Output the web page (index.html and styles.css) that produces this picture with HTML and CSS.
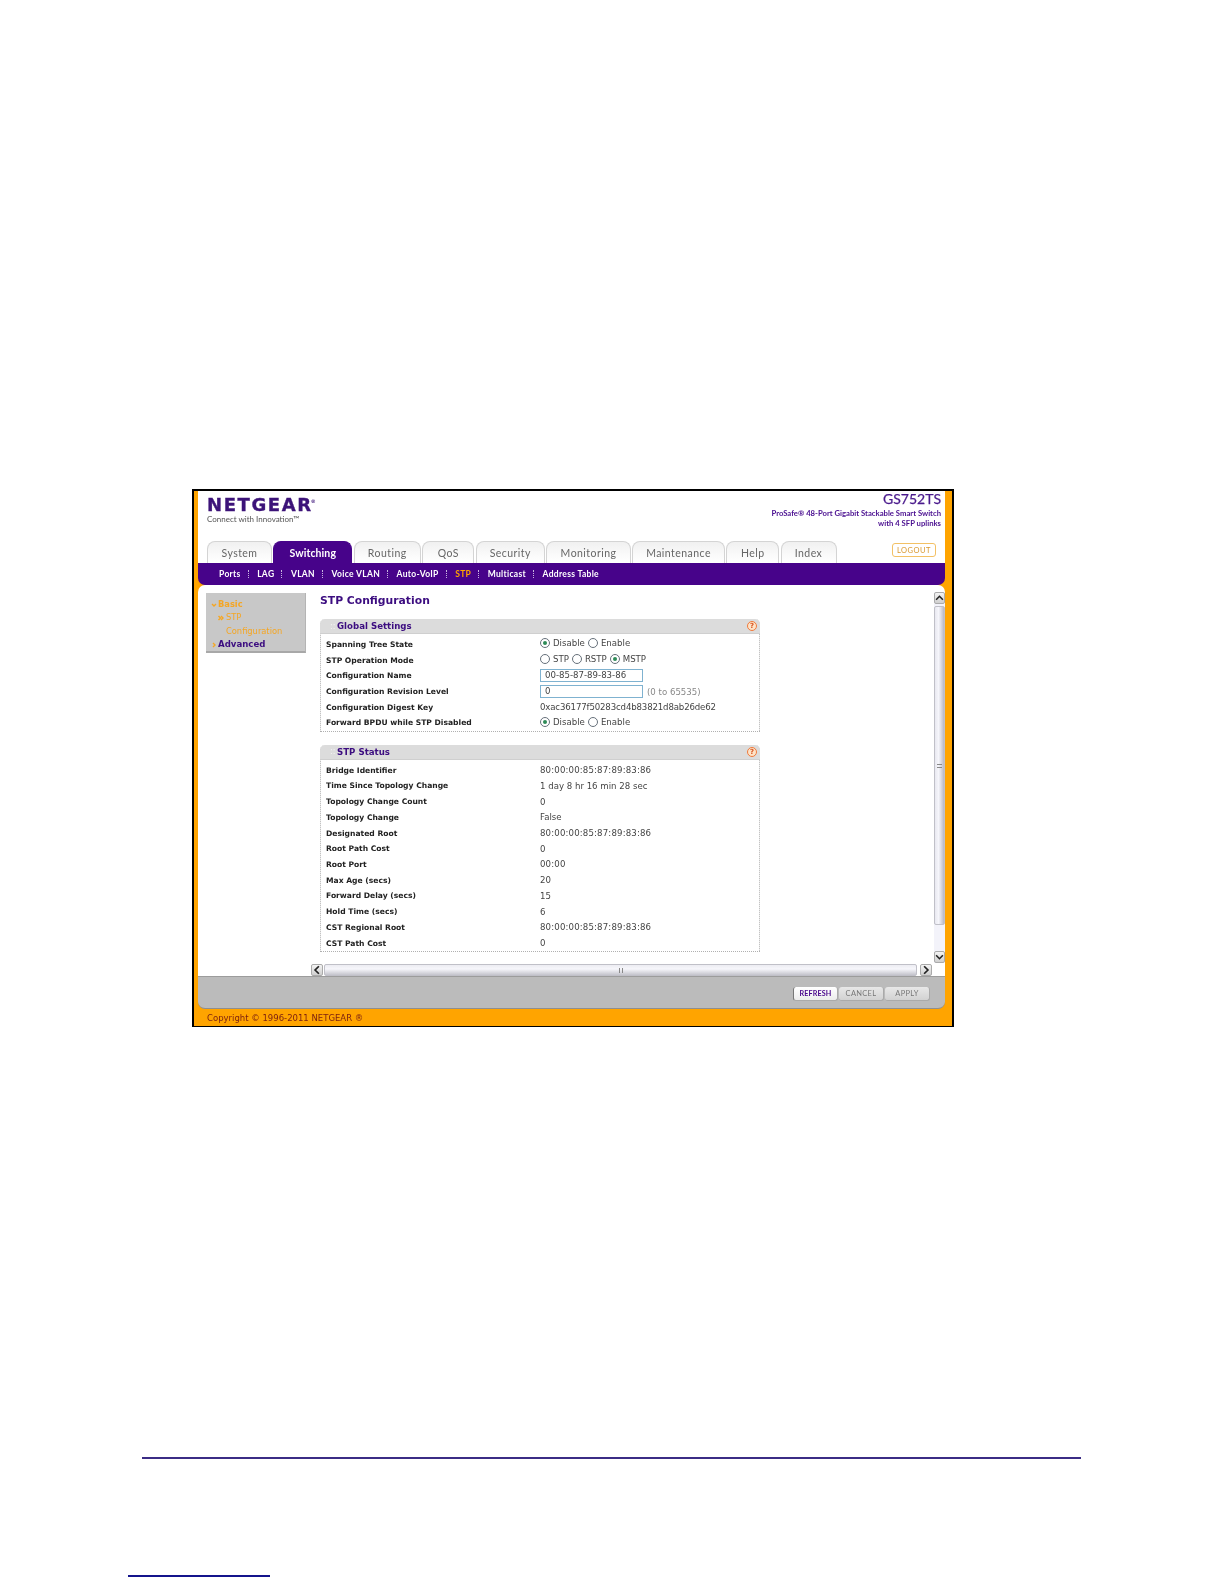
FILE: index.html
```html
<!DOCTYPE html>
<html lang="en">
<head>
<meta charset="utf-8">
<title>STP Configuration</title>
<link rel="stylesheet" href="styles.css">
</head>
<body>
<main class="page">
  <div class="frame">
    <header class="head">
      <div class="brand">
        <div class="logo">NETGEAR<sup class="reg">®</sup></div>
        <div class="tagline">Connect with Innovation™</div>
      </div>
      <div class="model">
        <div class="model-name">GS752TS</div>
        <div class="model-desc">ProSafe® 48-Port Gigabit Stackable Smart Switch</div>
        <div class="model-desc">with 4 SFP uplinks</div>
      </div>
    </header>
    <nav class="tabs">
      <a class="tab t1">System</a>
      <a class="tab t2 active">Switching</a>
      <a class="tab t3">Routing</a>
      <a class="tab t4">QoS</a>
      <a class="tab t5">Security</a>
      <a class="tab t6">Monitoring</a>
      <a class="tab t7">Maintenance</a>
      <a class="tab t8">Help</a>
      <a class="tab t9">Index</a>
      <a class="logout">LOGOUT</a>
    </nav>
    <nav class="subnav">
      <a class="sub">Ports</a><a class="sub">LAG</a><a class="sub">VLAN</a><a class="sub">Voice VLAN</a><a class="sub">Auto-VoIP</a><a class="sub current">STP</a><a class="sub">Multicast</a><a class="sub last">Address Table</a>
    </nav>
    <section class="content">
      <div class="view">
        <div class="pane">
          <aside class="side">
            <div class="side-row lvl1 on"><svg class="chev" viewBox="0 0 6 6"><path d="M1 2l2 2 2-2" /></svg>Basic</div>
            <div class="side-row lvl2"><svg class="chev chev2" viewBox="0 0 6 6"><path d="M.5 1l2 2-2 2M3 1l2 2-2 2" /></svg>STP</div>
            <div class="side-row lvl3">Configuration</div>
            <div class="side-row lvl1 off"><svg class="chev" viewBox="0 0 6 6"><path d="M2 1l2 2-2 2" /></svg>Advanced</div>
          </aside>
          <div class="main">
            <h1 class="title">STP Configuration</h1>
            <div class="box">
              <div class="box-head"><span class="grip">::</span><span class="box-title">Global Settings</span><span class="help">?</span></div>
              <div class="rows">
                <div class="row"><span class="label">Spanning Tree State</span><span class="val options"><i class="radio on"></i><span class="opt">Disable</span><i class="radio"></i><span class="opt">Enable</span></span></div>
                <div class="row"><span class="label">STP Operation Mode</span><span class="val options"><i class="radio"></i><span class="opt">STP</span><i class="radio"></i><span class="opt">RSTP</span><i class="radio on"></i><span class="opt">MSTP</span></span></div>
                <div class="row"><span class="label">Configuration Name</span><span class="val"><span class="field">00-85-87-89-83-86</span></span></div>
                <div class="row"><span class="label">Configuration Revision Level</span><span class="val"><span class="field">0</span><span class="hint">(0 to 65535)</span></span></div>
                <div class="row"><span class="label">Configuration Digest Key</span><span class="val digest">0xac36177f50283cd4b83821d8ab26de62</span></div>
                <div class="row"><span class="label">Forward BPDU while STP Disabled</span><span class="val options"><i class="radio on"></i><span class="opt">Disable</span><i class="radio"></i><span class="opt">Enable</span></span></div>
              </div>
            </div>
            <div class="box second">
              <div class="box-head"><span class="grip">::</span><span class="box-title">STP Status</span><span class="help">?</span></div>
              <div class="rows">
                <div class="row"><span class="label">Bridge Identifier</span><span class="val mac">80:00:00:85:87:89:83:86</span></div>
                <div class="row"><span class="label">Time Since Topology Change</span><span class="val">1 day 8 hr 16 min 28 sec</span></div>
                <div class="row"><span class="label">Topology Change Count</span><span class="val">0</span></div>
                <div class="row"><span class="label">Topology Change</span><span class="val">False</span></div>
                <div class="row"><span class="label">Designated Root</span><span class="val mac">80:00:00:85:87:89:83:86</span></div>
                <div class="row"><span class="label">Root Path Cost</span><span class="val">0</span></div>
                <div class="row"><span class="label">Root Port</span><span class="val mac">00:00</span></div>
                <div class="row"><span class="label">Max Age (secs)</span><span class="val">20</span></div>
                <div class="row"><span class="label">Forward Delay (secs)</span><span class="val">15</span></div>
                <div class="row"><span class="label">Hold Time (secs)</span><span class="val">6</span></div>
                <div class="row"><span class="label">CST Regional Root</span><span class="val mac">80:00:00:85:87:89:83:86</span></div>
                <div class="row"><span class="label">CST Path Cost</span><span class="val">0</span></div>
              </div>
            </div>
          </div>
        </div>
        <div class="vscroll">
          <span class="sb-btn"><svg viewBox="0 0 8 8"><path d="M1 5.5l3-3 3 3" /></svg></span>
          <span class="vthumb"><b class="vgrip"></b></span>
          <span class="sb-btn down"><svg viewBox="0 0 8 8"><path d="M1 2.5l3 3 3-3" /></svg></span>
        </div>
      </div>
      <div class="hscroll">
        <span class="sb-btn"><svg viewBox="0 0 8 8"><path d="M5.5 1l-3 3 3 3" /></svg></span>
        <span class="hthumb"><b class="hgrip"></b></span>
        <span class="sb-btn"><svg viewBox="0 0 8 8"><path d="M2.5 1l3 3-3 3" /></svg></span>
      </div>
    </section>
    <div class="actions">
      <a class="btn primary">REFRESH</a>
      <a class="btn">CANCEL</a>
      <a class="btn">APPLY</a>
    </div>
    <footer class="copy">Copyright © 1996-2011 NETGEAR ®</footer>
  </div>
  <div class="rule"></div>
  <div class="rule-short"></div>
</main>
</body>
</html>
```
FILE: styles.css
```css
* { box-sizing: border-box; }
html, body { margin: 0; background: #fff; }
body { font-family: "DejaVu Sans", Verdana, sans-serif; }
.page { width: 1224px; height: 1584px; padding-top: 489px; overflow: hidden; }

.frame {
  width: 762px; height: 538px; margin-left: 192px;
  border: solid #000; border-width: 2px 2px 1px 2px;
  background: #ffa400; padding: 0 7px 0 4px;
  filter: blur(.35px);
}

.head { height: 50px; background: #fff; display: flex; justify-content: space-between; padding: 7px 4px 0 9px; }
.logo { font: 700 18px/14px "DejaVu Sans", sans-serif; letter-spacing: 1.6px; color: #3c1379; -webkit-text-stroke: .35px #3c1379; }
.reg { font-size: 5px; line-height: 0; vertical-align: 8px; letter-spacing: 0; margin-left: -2px; -webkit-text-stroke: 0; }
.tagline { font: 400 8px/10px Lato, sans-serif; color: #555; margin-top: 2px; }
.model { text-align: right; margin-top: -7px; }
.model-name { font: 400 14px/16px Lato, sans-serif; color: #4a1a8c; margin-bottom: 2px; -webkit-text-stroke: .25px #4a1a8c; }
.model-desc { font: 700 7.7px/9.5px Lato, sans-serif; color: #4a0f90; }

.tabs { height: 22px; background: #fff; display: flex; gap: 1.25px; padding-left: 9px; align-items: flex-end; }
.tab {
  height: 22px; border: 1px solid #d4d4d4; border-bottom: 0; border-radius: 8px 8px 0 0;
  background: linear-gradient(#f0f0f0, #fafafa 60%, #fff);
  font: 400 10.5px/22px Lato, sans-serif; letter-spacing: .45px; color: #666; text-align: center;
}
.tab.active { background: #47038a; border-color: #47038a; color: #fff; font-weight: 700; letter-spacing: .1px; }
.t1 { width: 65px; } .t2 { width: 79px; } .t3 { width: 67.5px; } .t4 { width: 52px; }
.t5 { width: 69.5px; } .t6 { width: 84.5px; } .t7 { width: 93px; } .t8 { width: 53px; } .t9 { width: 56px; }
.logout {
  width: 44px; height: 14px; margin: 0 9px 6px auto; border: 1px solid #f3c165; border-radius: 3px;
  font: 400 7.5px/13px Lato, sans-serif; letter-spacing: .5px; color: #d9982f; text-align: center;
}

.subnav { height: 22px; background: #47038a; border-radius: 0 0 7px 7px; display: flex; align-items: center; padding-left: 21px; }
.sub { font: 700 8.5px/22px Lato, sans-serif; letter-spacing: .32px; color: #fff; padding: 0 8px 0 0; margin-right: 8.5px; position: relative; }
.sub::after { content: ""; position: absolute; right: 0; top: 7px; height: 8px; border-right: 1px dotted #c8b4e0; }
.sub.last { margin-right: 0; padding-right: 0; }
.sub.last::after { display: none; }
.sub.current { color: #ffa400; }

.content { height: 391px; background: #fff; border-radius: 7px 7px 0 0; display: flex; flex-direction: column; }
.view { height: 378px; display: flex; }
.pane { flex: 1; display: flex; padding: 8px 0 0 8px; min-width: 0; }
.side { width: 100px; height: 60px; background: #c8c8c8; border-bottom: 2px solid #a8a8a8; border-right: 1px solid #b4b4b4; padding-top: 5px; flex: none; }
.side-row { height: 13.3px; font-size: 8.3px; line-height: 13.3px; display: flex; align-items: center; }
.lvl1 { font-weight: 700; padding-left: 5px; color: #f5a623; }
.lvl1.off { color: #3c0d80; font-size: 8.6px; }
.lvl2 { padding-left: 12px; color: #f5a623; }
.lvl3 { padding-left: 20px; color: #f5a623; }
.chev { width: 6px; height: 6px; margin-right: 1px; fill: none; stroke: #f5a623; stroke-width: 1.4; flex: none; }
.chev2 { margin-right: 2px; }

.main { width: 442px; margin-left: 14px; flex: none; }
.title { margin: 0 0 10px; font-size: 10.8px; line-height: 16px; font-weight: 700; color: #3c0d80; }
.box { width: 440px; border: 1px dotted #b0b0b0; border-top: 0; border-radius: 5px 5px 0 0; }
.box.second { margin-top: 13px; }
.box-head { height: 15px; margin: 0 -1px; background: #dcdcdc; border-radius: 5px 5px 0 0; border-bottom: 1px solid #cfcfcf; display: flex; align-items: center; padding: 0 3px 0 10px; }
.grip { width: 7px; color: #f4f4f4; font-size: 8px; }
.box-title { flex: 1; font-size: 8.65px; font-weight: 700; color: #3c0d80; }
.help { width: 10px; height: 10px; border: 1px solid #f07a3c; border-radius: 50%; background: #fde3c8; font-size: 7px; font-weight: 700; line-height: 8px; text-align: center; color: #d9531e; }
.rows { padding-top: 2.5px; }
.row { height: 15.73px; display: flex; align-items: center; font-size: 8.6px; color: #444; }
.label { width: 219px; padding-left: 5px; font-weight: 700; color: #222; flex: none; font-size: 7.6px; }
.val { display: flex; align-items: center; white-space: nowrap; }
.val.options { margin-top: -2px; }
.val.digest { letter-spacing: -.15px; }
.val.mac { letter-spacing: .15px; }
.radio { width: 10px; height: 10px; border: 1px solid #66707a; border-radius: 50%; margin-right: 3px; background: #fff; display: block; position: relative; }
.radio.on::after { content: ""; position: absolute; left: 2px; top: 2px; width: 4px; height: 4px; border-radius: 50%; background: #2e8b57; }
.opt { margin-right: 3px; }
.field { width: 103px; height: 13px; border: 1px solid #7fb2d0; padding-left: 4px; line-height: 11px; background: #fff; }
.hint { margin-left: 4px; color: #888; }

.vscroll { width: 11px; margin: 7px 0 0 2px; display: flex; flex-direction: column; gap: 2px; background: #f3f3fa; flex: none; }
.sb-btn { width: 12px; height: 12px; display: block; flex: none; background: linear-gradient(#f4f4f4, #cfcfcf); border: 1px solid #aaa; border-radius: 2px; }
.vscroll .sb-btn { width: 11px; }
.sb-btn.down { margin-top: auto; }
.sb-btn svg { display: block; width: 100%; height: 100%; fill: none; stroke: #222; stroke-width: 1.4; }
.vthumb { height: 319px; flex: none; background: linear-gradient(90deg, #e8e8f0, #f6f6fb 40%, #b8b8c4); border: 1px solid #c0c0c8; border-radius: 2px; display: flex; align-items: center; justify-content: center; }
.vgrip { width: 5px; height: 4px; border: solid #888; border-width: 1px 0; }
.hscroll { height: 12px; margin: 1px 13px 0 113px; display: flex; }
.hthumb { flex: 1; margin: 0 3px 0 1px; background: linear-gradient(#ececf2, #f6f6fb 40%, #c4c4cc); border: 1px solid #c0c0c8; border-radius: 2px; display: flex; align-items: center; justify-content: center; }
.hgrip { width: 4px; height: 5px; border: solid #888; border-width: 0 1px; }

.actions { height: 33px; background: #bbb; border-radius: 0 0 7px 7px; border-top: 1px solid #9c9c9c; border-bottom: 1px solid #8f8f8f; display: flex; justify-content: flex-end; gap: 1px; padding: 10px 15px 0 0; }
.btn { width: 45px; height: 14px; border-radius: 3px; background: linear-gradient(#e8e8e8, #d2d2d2); border-bottom: 1px solid #aaa; border-right: 1px solid #aaa; font: 400 7.5px/13px Lato, sans-serif; letter-spacing: .3px; color: #777; text-align: center; }
.btn.primary { background: linear-gradient(#fff, #ececec); font-weight: 700; font-size: 7.2px; letter-spacing: .1px; color: #47038a; border-left: 1px solid #777; }

.copy { height: 15px; padding-left: 9px; font-size: 8.5px; line-height: 19px; color: #7a1f10; }

.rule { width: 939px; height: 2px; margin: 430px 0 0 142px; background: #3b2c85; }
.rule-short { width: 142px; height: 2px; margin: 116px 0 0 128px; background: #14148c; }
```
